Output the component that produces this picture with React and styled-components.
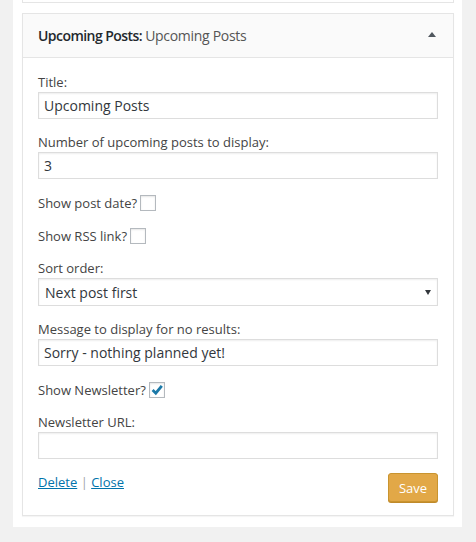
import React from 'react'
import styled, { createGlobalStyle } from 'styled-components'

const GlobalStyle = createGlobalStyle`
    html, body {
        margin: 0;
        padding: 0;
        background: #f1f1f1;
    }
    body {
        font-family: "Open Sans", "Liberation Sans", sans-serif;
        font-size: 13px;
        color: #444;
    }
`

const Page = styled.div`
    width: 476px;
    height: 542px;
    padding-left: 13px;
    box-sizing: border-box;
    overflow: hidden;
`

const Sidebar = styled.div`
    width: 449px;
    background: #fff;
    padding: 0 8px 11px 9px;
    box-sizing: border-box;
`

const PrevWidget = styled.div`
    height: 3px;
    border: 1px solid #e5e5e5;
    border-top: none;
    box-sizing: border-box;
    margin-bottom: 10px;
`

const Widget = styled.div`
    border: 1px solid #e5e5e5;
    box-shadow: 0 1px 1px rgba(0, 0, 0, 0.04);
    background: #fff;
`

const Header = styled.div`
    display: flex;
    align-items: center;
    justify-content: space-between;
    height: 43px;
    padding: 0 17px 0 15px;
    background: #fafafa;
    border-bottom: 1px solid #e5e5e5;
`

const Title = styled.h3`
    margin: 0;
    font-size: 14px;
    font-weight: 600;
    letter-spacing: -0.55px;
    color: #23282d;
    line-height: 18px;

    span {
        font-weight: 400;
        letter-spacing: -0.3px;
        color: #555;
    }
`

const Toggle = styled.span`
    width: 0;
    height: 0;
    border-left: 4px solid transparent;
    border-right: 4px solid transparent;
    border-bottom: 5px solid #50575e;
    margin-top: -2px;
`

const Body = styled.div`
    padding: 15px 15px 13px;
    display: flex;
    flex-direction: column;
    gap: 14px;
`

const Field = styled.div`
    display: flex;
    flex-direction: column;
    gap: 1px;
`

const Label = styled.label`
    display: block;
    line-height: 18px;
    font-size: 13px;
    color: #444;
`

const TextInput = styled.input`
    box-sizing: border-box;
    width: 100%;
    height: 27px;
    margin: 0;
    padding: 0 5px;
    border: 1px solid #ddd;
    box-shadow: inset 0 1px 2px rgba(0, 0, 0, 0.07);
    background: #fff;
    font-family: "Open Sans", "Liberation Sans", sans-serif;
    font-size: 14px;
    color: #32373c;
    outline: none;
`

const SelectWrap = styled.div`
    position: relative;

    &::after {
        content: "";
        position: absolute;
        right: 7px;
        top: 12px;
        border-left: 3px solid transparent;
        border-right: 3px solid transparent;
        border-top: 5px solid #32373c;
    }
`

const Select = styled.select`
    appearance: none;
    -webkit-appearance: none;
    box-sizing: border-box;
    width: 100%;
    height: 28px;
    margin: 0;
    padding: 0 6px;
    border: 1px solid #ddd;
    border-radius: 0;
    box-shadow: inset 0 1px 2px rgba(0, 0, 0, 0.07);
    background: #fff;
    font-family: "Open Sans", "Liberation Sans", sans-serif;
    font-size: 14px;
    color: #32373c;
    outline: none;
`

const CheckRow = styled.div`
    display: flex;
    align-items: center;
    height: 19px;
    gap: 3px;
`

const Box = styled.span`
    position: relative;
    display: inline-block;
    width: 16px;
    height: 16px;
    box-sizing: border-box;
    border: 1px solid #b4b9be;
    background: #fff;
    box-shadow: inset 0 1px 2px rgba(0, 0, 0, 0.1);

    svg {
        position: absolute;
        left: 0;
        top: 0;
    }
`

const Controls = styled.div`
    display: flex;
    justify-content: space-between;
    align-items: flex-start;
`

const Links = styled.div`
    line-height: 18px;
    font-size: 13px;
    color: #a0a5aa;

    a {
        color: #0073aa;
        text-decoration: underline;
    }
`

const SaveButton = styled.button`
    height: 29px;
    width: 50px;
    padding: 0;
    border: 1px solid #c9942f;
    border-radius: 3px;
    background: #e2a847;
    box-shadow: 0 1px 0 #c08a2a;
    color: #fff;
    font-family: "Open Sans", "Liberation Sans", sans-serif;
    font-size: 13px;
    cursor: pointer;
`

function Checkbox({ checked }) {
    return (
        <Box>
            {checked && (
                <svg width="14" height="14" viewBox="0 0 14 14">
                    <path d="M2.6 7 L5.8 10.2 L11.8 2.8" fill="none" stroke="#1b79a8" strokeWidth="2.8" strokeLinejoin="miter" />
                </svg>
            )}
        </Box>
    )
}

export default function App() {
    return (
        <Page>
            <GlobalStyle />
            <Sidebar>
                <PrevWidget />
                <Widget>
                    <Header>
                        <Title>Upcoming Posts: <span>Upcoming Posts</span></Title>
                        <Toggle />
                    </Header>
                    <Body>
                        <Field>
                            <Label>Title:</Label>
                            <TextInput type="text" defaultValue="Upcoming Posts" />
                        </Field>
                        <Field>
                            <Label>Number of upcoming posts to display:</Label>
                            <TextInput type="text" defaultValue="3" />
                        </Field>
                        <CheckRow>
                            <Label>Show post date?</Label>
                            <Checkbox />
                        </CheckRow>
                        <CheckRow>
                            <Label>Show RSS link?</Label>
                            <Checkbox />
                        </CheckRow>
                        <Field>
                            <Label>Sort order:</Label>
                            <SelectWrap>
                                <Select defaultValue="next">
                                    <option value="next">Next post first</option>
                                    <option value="last">Last post first</option>
                                </Select>
                            </SelectWrap>
                        </Field>
                        <Field>
                            <Label>Message to display for no results:</Label>
                            <TextInput type="text" defaultValue="Sorry - nothing planned yet!" />
                        </Field>
                        <CheckRow>
                            <Label>Show Newsletter?</Label>
                            <Checkbox checked />
                        </CheckRow>
                        <Field>
                            <Label>Newsletter URL:</Label>
                            <TextInput type="text" defaultValue="" />
                        </Field>
                        <Controls>
                            <Links>
                                <a href="#delete">Delete</a> | <a href="#close">Close</a>
                            </Links>
                            <SaveButton>Save</SaveButton>
                        </Controls>
                    </Body>
                </Widget>
            </Sidebar>
        </Page>
    )
}
